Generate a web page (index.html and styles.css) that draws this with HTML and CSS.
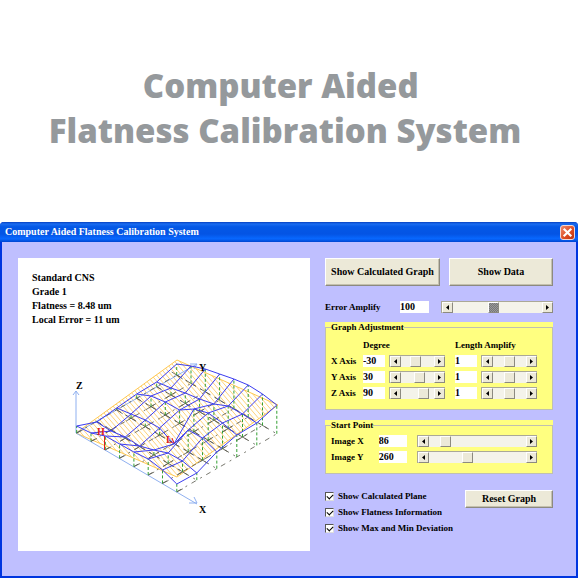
FILE: index.html
```html
<!DOCTYPE html>
<html lang="en">
<head>
<meta charset="utf-8">
<title>Computer Aided Flatness Calibration System</title>
<link rel="stylesheet" href="styles.css">
</head>
<body>
<svg width="0" height="0" class="defs" aria-hidden="true">
  <symbol id="left" viewBox="0 0 5 7"><path d="M4 1v5L1 3.5z"/></symbol>
  <symbol id="right" viewBox="0 0 5 7"><path d="M1 1v5l3-2.500z"/></symbol>
</svg>
<h1>Computer Aided&nbsp;<br>Flatness Calibration System</h1>
<main class="window">
  <header class="titlebar">
    <h2>Computer Aided Flatness Calibration System</h2>
    <button class="close" aria-label="Close"><svg viewBox="0 0 12 12"><path d="M2.500 2.500l7 7M9.500 2.500l-7 7"/></svg></button>
  </header>
  <div class="content">
    <section class="graph">
      <p>Standard CNS<br>Grade 1<br>Flatness = 8.48 um<br>Local Error = 11 um</p>
      <svg id="plot" viewBox="18 350 292 200" role="img" aria-label="Flatness surface"></svg>
    </section>
    <form class="controls">
      <div class="actions">
        <button type="button" class="btn">Show Calculated Graph</button>
        <button type="button" class="btn">Show Data</button>
      </div>
      <div class="error">
        <label for="err">Error Amplify</label>
        <input type="text" id="err" value="100">
        <div class="scroll"><button type="button" aria-label="Less"><svg><use href="#left"/></svg></button><input class="busy" type="range" aria-label="Error amplify" min="0" max="220" value="100"><button type="button" aria-label="More"><svg><use href="#right"/></svg></button></div>
      </div>
      <div class="group adjust">
        <fieldset>
          <legend>Graph Adjustment</legend>
          <div class="axis heads"><span></span><span>Degree</span><span>Length Amplify</span></div>
          <div class="axis">
            <label for="dx">X Axis</label>
            <div class="pair"><input type="text" id="dx" value="-30"><div class="scroll"><button type="button" aria-label="Less"><svg><use href="#left"/></svg></button><input type="range" aria-label="X degree" min="-180" max="180" value="-30"><button type="button" aria-label="More"><svg><use href="#right"/></svg></button></div></div>
            <div class="pair"><input type="text" aria-label="X length" value="1"><div class="scroll"><button type="button" aria-label="Less"><svg><use href="#left"/></svg></button><input type="range" aria-label="X length amplify" min="0" max="2" value="1"><button type="button" aria-label="More"><svg><use href="#right"/></svg></button></div></div>
          </div>
          <div class="axis">
            <label for="dy">Y Axis</label>
            <div class="pair"><input type="text" id="dy" value="30"><div class="scroll"><button type="button" aria-label="Less"><svg><use href="#left"/></svg></button><input type="range" aria-label="Y degree" min="-180" max="180" value="30"><button type="button" aria-label="More"><svg><use href="#right"/></svg></button></div></div>
            <div class="pair"><input type="text" aria-label="Y length" value="1"><div class="scroll"><button type="button" aria-label="Less"><svg><use href="#left"/></svg></button><input type="range" aria-label="Y length amplify" min="0" max="2" value="1"><button type="button" aria-label="More"><svg><use href="#right"/></svg></button></div></div>
          </div>
          <div class="axis">
            <label for="dz">Z Axis</label>
            <div class="pair"><input type="text" id="dz" value="90"><div class="scroll"><button type="button" aria-label="Less"><svg><use href="#left"/></svg></button><input type="range" aria-label="Z degree" min="-180" max="180" value="90"><button type="button" aria-label="More"><svg><use href="#right"/></svg></button></div></div>
            <div class="pair"><input type="text" aria-label="Z length" value="1"><div class="scroll"><button type="button" aria-label="Less"><svg><use href="#left"/></svg></button><input type="range" aria-label="Z length amplify" min="0" max="2" value="1"><button type="button" aria-label="More"><svg><use href="#right"/></svg></button></div></div>
          </div>
        </fieldset>
      </div>
      <div class="group start">
        <fieldset>
          <legend>Start Point</legend>
          <div class="point">
            <label for="ix">Image X</label>
            <input type="text" id="ix" value="86">
            <div class="scroll"><button type="button" aria-label="Less"><svg><use href="#left"/></svg></button><input type="range" aria-label="Image X position" min="0" max="680" value="86"><button type="button" aria-label="More"><svg><use href="#right"/></svg></button></div>
          </div>
          <div class="point">
            <label for="iy">Image Y</label>
            <input type="text" id="iy" value="260">
            <div class="scroll"><button type="button" aria-label="Less"><svg><use href="#left"/></svg></button><input type="range" aria-label="Image Y position" min="0" max="680" value="260"><button type="button" aria-label="More"><svg><use href="#right"/></svg></button></div>
          </div>
        </fieldset>
      </div>
      <div class="options">
        <div class="checks">
          <label><input type="checkbox" checked>Show Calculated Plane</label>
          <label><input type="checkbox" checked>Show Flatness Information</label>
          <label><input type="checkbox" checked>Show Max and Min Deviation</label>
        </div>
        <button type="button" class="btn reset">Reset Graph</button>
      </div>
    </form>
  </div>
</main>
<script src="plot.js"></script>
</body>
</html>
```
FILE: styles.css
```css
* { box-sizing: border-box; }
body {
  margin: 0;
  min-height: 100vh;
  display: flex;
  flex-direction: column;
  background: #fff;
  color: #000;
  font: bold 9px/12px "Liberation Serif", serif;
}
.defs { position: absolute; }
h1 {
  margin: 0;
  padding: 63px 8px 69px 0;
  text-align: center;
  color: #95999c;
  font: 800 33px/45px "Open Sans", sans-serif;
}
.window {
  flex: 1;
  display: flex;
  flex-direction: column;
  background: #bfbfff;
  border: 2px solid #0035df;
  border-top: 0;
  border-radius: 4px 4px 0 0;
}
.titlebar {
  display: flex;
  align-items: center;
  justify-content: space-between;
  height: 20px;
  margin: 0 -2px;
  padding: 0 3px 0 5px;
  border-radius: 4px 4px 0 0;
  background: linear-gradient(#0540c0, #1a6cf0 10%, #0458e6 24%, #0454e4 60%, #0868ff 84%, #0045d0);
}
h2 {
  margin: 0;
  color: #fff;
  font: bold 10px/14px "Liberation Serif", serif;
}
button, input { font: inherit; color: inherit; margin: 0; }
.close {
  width: 15px;
  height: 15px;
  padding: 0;
  border: 1px solid #f3d8d4;
  border-radius: 3px;
  background: linear-gradient(135deg, #f08a6c, #dc4a20 60%, #b93310);
}
.close svg { display: block; width: 100%; stroke: #fff; stroke-width: 2; }
.content {
  flex: 1;
  display: grid;
  grid-template-columns: minmax(0, 292fr) minmax(0, 228fr);
  gap: 15px;
  padding: 16px 23px 25px 16px;
}
.graph { background: #fff; padding-top: 13px; }
.graph p {
  margin: 0 0 23px 14px;
  font-size: 10px;
  line-height: 14px;
}
#plot { display: block; width: 100%; }
.controls { display: flex; flex-direction: column; }
.btn {
  padding: 0;
  font-size: 10px;
  line-height: 14px;
  white-space: nowrap;
  background: #ece9d8;
  border: 1px solid;
  border-color: #fff #8c8a80 #8c8a80 #fff;
  box-shadow: inset -1px -1px #c4c0ae;
}
.actions {
  display: grid;
  grid-template-columns: minmax(0, 115fr) minmax(0, 104fr);
  gap: 9px;
}
.actions .btn { height: 28px; }
.error {
  display: grid;
  grid-template-columns: minmax(0, 63fr) minmax(0, 29fr) minmax(0, 112fr);
  column-gap: 12px;
  align-items: center;
  margin: 15px 0 9px;
}
label, legend, .heads { white-space: nowrap; }
input[type="text"] {
  width: 100%;
  min-width: 0;
  height: 12px;
  padding: 0;
  border: 0;
  background: #fff;
  font-size: 10px;
  line-height: 12px;
}
.scroll {
  display: flex;
  min-width: 0;
  height: 12px;
  background: #f4f3ea;
  border-top: 1px solid #aaa897;
  border-left: 1px solid #aaa897;
}
.scroll button {
  flex: none;
  display: grid;
  place-items: center;
  width: 11px;
  padding: 0;
  background: #ece9d8;
  border: 1px solid;
  border-color: #fff #8c8a80 #8c8a80 #fff;
}
.scroll svg { width: 5px; height: 7px; }
input[type="range"] {
  appearance: none;
  flex: 1;
  width: 0;
  min-width: 0;
  background: none;
}
input[type="range"]::-webkit-slider-thumb {
  appearance: none;
  width: 11px;
  height: 11px;
  border: 1px solid;
  border-color: #fff #8c8a80 #8c8a80 #fff;
  background: #ece9d8;
}
input.busy[type="range"]::-webkit-slider-thumb {
  background: repeating-conic-gradient(#777 0 25%, #999 0 50%) 0 0 / 2px 2px;
}
.group { background: #ffff80; }
.start { margin-top: 10px; }
fieldset {
  display: grid;
  gap: 4px;
  min-width: 0;
  margin: 0;
  padding: 6px 15px 10px 5px;
  border: 1px solid #c0c0b0;
}
.start fieldset { padding-top: 4px; }
legend { padding: 0; line-height: 11px; }
.axis, .point { display: grid; gap: 10px; align-items: center; }
.axis { grid-template-columns: minmax(0, 22fr) minmax(0, 82fr) minmax(0, 82fr); }
.point { grid-template-columns: minmax(0, 38fr) minmax(0, 28fr) minmax(0, 121fr); }
.pair { display: grid; grid-template-columns: minmax(0, 22fr) minmax(0, 56fr); gap: 4px; }
.options {
  display: flex;
  justify-content: space-between;
  align-items: flex-start;
  padding-top: 16px;
}
.checks { display: grid; gap: 4px; }
.checks label { display: flex; align-items: center; gap: 4px; }
.checks input {
  appearance: none;
  width: 9px;
  height: 9px;
  border: 1px solid;
  border-color: #555 #ddd #ddd #555;
  background: #fff;
}
.checks input:checked::before {
  content: "";
  display: block;
  width: 5px;
  height: 3px;
  margin: 1px;
  border: solid #000;
  border-width: 0 0 1px 1px;
  transform: rotate(-45deg);
}
.reset { width: 88px; height: 18px; }
```
FILE: plot.js
```js
// Measured surface: screen heights of the nodes, one row per Y station.
const surface = [
  [426, 433, 436, 444, 452, 459, 470, 484],
  [422, 431, 437, 446, 450, 453, 461, 473],
  [408, 414, 420, 428, 444, 430, 438, 452],
  [394, 396, 402, 410, 409, 413, 423, 435],
  [382, 388, 393, 399, 404, 406, 414, 423],
  [364, 366, 369, 374, 379, 385, 394, 405]
];
const X = (i, j) => 76.7 + 14.3 * i + 20 * j;
const base = (i, j) => 433 + 8.4 * i - 11.6 * j;
const path = (d, attrs) => `<path d="${d}" fill="none" ${attrs}/>`;
const line = pts => "M" + pts.map(p => p.join(" ")).join("L");
const across = [...Array(8).keys()];
const along = [...Array(6).keys()];

let out = '<defs><clipPath id="plane"><path d="M76 433L177 360L278 405L177 477z"/></clipPath></defs>';
let hatch = "";
for (let x = -60; x < 300; x += 5) hatch += `M${x} 350l120 140`;
out += path(hatch, 'stroke="#ffd27a" clip-path="url(#plane)"');
out += path("M76 433L177 360L278 405L177 477z", 'stroke="#ffc84f"');
out += path("M76 433V391M73 395l3-4l3 4M76 433L197 364M190 364h7l-3 5M76 433L197 504M189 503h8l-3-6", 'stroke="#8fb0f0"');

let ground = "", marks = "", drops = "";
across.forEach(i => { ground += line([[X(i, 0), base(i, 0)], [X(i, 5), base(i, 5)]]); });
along.slice(1).forEach(j => { ground += line([[X(0, j), base(0, j)], [X(7, j), base(7, j)]]); });
along.forEach(j => across.forEach(i => {
  const x = X(i, j), y = base(i, j);
  if (j > 0 && i < 7 && j < 5 && i > 0) marks += `M${x - 5} ${y - 3}l10 6M${x - 5} ${y + 3}l10-6`;
  if (j === 0) marks += `M${x} ${y}l6-3`;
  if (j === 5 && i < 7) marks += `M${x - 5} ${y - 3}l10 6`;
  if (j > 0 && i === 0) marks += `M${x} ${y}l6 4`;
  drops += `M${x} ${y}V${surface[j][i]}`;
}));
out += path(ground, 'stroke="#55554a" stroke-width=".8" stroke-dasharray="5 5 2 5"');
out += path(marks, 'stroke="#55554a" stroke-width=".8"');
out += path(drops, 'stroke="#35a035" stroke-dasharray="3 2"');

let mesh = "";
along.forEach(j => { mesh += line(across.map(i => [X(i, j), surface[j][i]])); });
across.forEach(i => { mesh += line(along.map(j => [X(i, j), surface[j][i]])); });
out += path(mesh, 'stroke="#3c3cf0"');
out += path("M104.500 436V450M172 438l2 5", 'stroke="#e02020"');
const text = (x, y, s, c) => `<text x="${x}" y="${y}" fill="${c}" font-size="10">${s}</text>`;
out += text(76, 389, "Z", "#000") + text(199, 371, "Y", "#000") + text(199, 513, "X", "#000");
out += text(97, 435, "H", "#e02020") + text(166, 443, "L", "#e02020");
document.getElementById("plot").innerHTML = out;
```
